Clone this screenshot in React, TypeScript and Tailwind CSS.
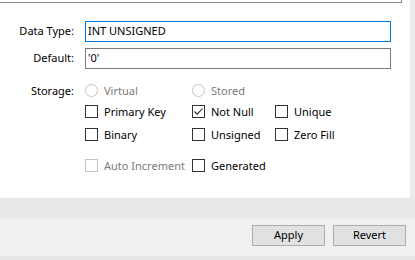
const font = { fontFamily: '"Segoe UI", "Noto Sans", "Open Sans", sans-serif' };

function Check({ label, checked = false, disabled = false }: { label: string; checked?: boolean; disabled?: boolean }) {
  return (
    <div className="flex items-center gap-[6px] h-[13px] whitespace-nowrap">
      <span
        className={`w-[13px] h-[13px] border bg-white flex items-center justify-center shrink-0 ${
          disabled ? 'border-[#c4c4c4]' : 'border-[#333333]'
        }`}
      >
        {checked && (
          <svg width="11" height="11" viewBox="0 0 11 11">
            <path d="M1.5 5.5 L4.2 8.2 L9.5 2.5" fill="none" stroke="#222" strokeWidth="1.1" />
          </svg>
        )}
      </span>
      <span className={`leading-none ${disabled ? 'text-[#7a7a7a]' : 'text-black'}`}>{label}</span>
    </div>
  );
}

function Radio({ label }: { label: string }) {
  return (
    <div className="flex items-center gap-[6px] h-[13px] whitespace-nowrap">
      <span className="w-[13px] h-[13px] rounded-full border border-[#c4c4c4] bg-white shrink-0" />
      <span className="leading-none text-[#7a7a7a]">{label}</span>
    </div>
  );
}

export default function App() {
  return (
    <div className="w-[415px] h-[260px] flex flex-col bg-[#f0f0f0] text-[11px] text-black overflow-hidden" style={font}>
      <div className="flex h-[198px]">
        <div className="w-[410px] bg-white flex flex-col">
          {/* box from the panel above */}
          <div className="w-[402px] h-[3px] border-b border-r border-[#8a8a8a]" />

          <div className="flex items-center mt-[18px]">
            <div className="w-[74px] text-right">Data Type:</div>
            <div className="ml-[11px] w-[306px] h-[21px] border border-[#0078d7] flex items-center px-[2px]">INT UNSIGNED</div>
          </div>
          <div className="flex items-center mt-[6px]">
            <div className="w-[74px] text-right">Default:</div>
            <div className="ml-[11px] w-[306px] h-[21px] border border-[#7a7a7a] flex items-center px-[2px]">'0'</div>
          </div>

          <div className="flex items-center mt-[15px] h-[13px]">
            <div className="w-[74px] text-right leading-none">Storage:</div>
            <div className="ml-[11px] w-[107px]">
              <Radio label="Virtual" />
            </div>
            <Radio label="Stored" />
          </div>

          <div className="ml-[85px] flex flex-col">
            <div className="flex mt-[8px]">
              <div className="w-[107px]"><Check label="Primary Key" /></div>
              <div className="w-[83px]"><Check label="Not Null" checked /></div>
              <Check label="Unique" />
            </div>
            <div className="flex mt-[10px]">
              <div className="w-[107px]"><Check label="Binary" /></div>
              <div className="w-[83px]"><Check label="Unsigned" /></div>
              <Check label="Zero Fill" />
            </div>
            <div className="flex mt-[18px]">
              <div className="w-[107px]"><Check label="Auto Increment" disabled /></div>
              <Check label="Generated" />
            </div>
          </div>
        </div>
        <div className="flex-1 bg-[#ebebeb]" />
      </div>

      <div className="h-[20px] bg-[#e8e8e8]" />

      <div className="flex justify-end gap-[8px] pr-[9px] mt-[7px]">
        <button className="w-[73px] h-[21px] bg-[#e1e1e1] border border-[#adadad] text-black">Apply</button>
        <button className="w-[73px] h-[21px] bg-[#e1e1e1] border border-[#adadad] text-black">Revert</button>
      </div>
      <div className="flex-1" />
      <div className="h-[4px] bg-[#e6e6e6]" />
    </div>
  );
}
